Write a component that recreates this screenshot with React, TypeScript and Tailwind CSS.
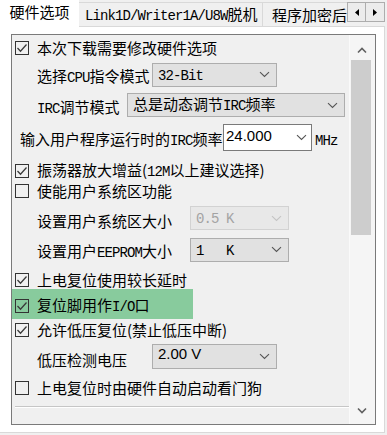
import type { ReactNode } from 'react';

function Mono({ children }: { children: ReactNode }) {
  return <span className="font-['Liberation_Mono',monospace] text-[14px] tracking-[-0.9px]">{children}</span>;
}

function Box({ checked }: { checked?: boolean }) {
  return (
    <span className="w-[14px] h-[14px] border border-[#333333] flex items-center justify-center shrink-0">
      {checked && (
        <svg width="12" height="12" viewBox="0 0 12 12">
          <path d="M1.5 6 L4.5 9.2 L10.5 2.5" fill="none" stroke="#3a3a3a" strokeWidth="1.3" />
        </svg>
      )}
    </span>
  );
}

function Chevron({ color = '#555555' }: { color?: string }) {
  return (
    <svg width="11" height="7" viewBox="0 0 11 7" className="shrink-0">
      <path d="M1 1.2 L5.5 5.5 L10 1.2" fill="none" stroke={color} strokeWidth="1.1" />
    </svg>
  );
}

function Combo({
  width,
  children,
  disabled,
}: {
  width: string;
  children: ReactNode;
  disabled?: boolean;
}) {
  return (
    <div
      className={`${width} h-[24px] flex items-center justify-between pl-[5px] pr-[6px] border ${
        disabled ? 'bg-[#e8e8e8] border-[#d2d2d2] text-[#a3a3a3]' : 'bg-[#e1e1e1] border-[#adadad] text-black'
      }`}
    >
      <span className="whitespace-pre leading-[20px]">{children}</span>
      <Chevron color={disabled ? '#c4c4c4' : '#555555'} />
    </div>
  );
}

function CheckRow({ checked, children, h, extra = '' }: { checked?: boolean; children: ReactNode; h: string; extra?: string }) {
  return (
    <div className={`${h} flex items-center pl-[3px] gap-[8px] ${extra}`}>
      <Box checked={checked} />
      <span className="whitespace-nowrap leading-[20px]">{children}</span>
    </div>
  );
}

export default function App() {
  return (
    <div className="w-[387px] h-[435px] bg-[#f0f0f0] overflow-hidden text-black text-[15px] font-['Noto_Sans_CJK_SC',sans-serif]">
      {/* tab strip */}
      <div className="flex h-[26px] items-end">
        <div className="relative z-10 w-[79px] h-[27px] -mb-px bg-white flex items-center justify-center pb-[3px]">
          <span className="leading-[20px]">硬件选项</span>
        </div>
        <div className="w-[184px] h-[24px] bg-[#f0f0f0] border-t border-r border-[#d9d9d9] flex items-center pl-[6px]">
          <span className="whitespace-nowrap leading-[20px]">
            <Mono>Link1D/Writer1A/U8W</Mono>脱机
          </span>
        </div>
        <div className="w-[84px] h-[24px] bg-[#f0f0f0] border-t border-[#d9d9d9] flex items-center pl-[9px] overflow-hidden">
          <span className="whitespace-nowrap leading-[20px]">程序加密后</span>
        </div>
        <div className="flex self-start mt-[2px]">
          <div className="w-[19px] h-[20px] border border-[#adadad] bg-[#ececec] flex items-center justify-center">
            <svg width="4" height="7" viewBox="0 0 4 7">
              <path d="M4 0 L0 3.5 L4 7 Z" fill="#000" />
            </svg>
          </div>
          <div className="w-[19px] h-[20px] border border-l-0 border-[#adadad] bg-[#ececec] flex items-center justify-center">
            <svg width="4" height="7" viewBox="0 0 4 7">
              <path d="M0 0 L4 3.5 L0 7 Z" fill="#000" />
            </svg>
          </div>
        </div>
      </div>

      {/* tab page */}
      <div className="w-[385px] h-[407px] bg-white border-t border-r border-b border-[#d9d9d9] pt-[7px] pl-[11px]">
        <div className="w-[365px] h-[391px] border border-[#7a7a7a] bg-[#f0f0f0] flex">
          {/* content */}
          <div className="w-[337px] flex flex-col">
            <CheckRow checked h="h-[26px]">
              本次下载需要修改硬件选项
            </CheckRow>

            <div className="h-[27px] flex items-center pl-[25px]">
              <span className="w-[115px] whitespace-nowrap leading-[20px] mt-[5px]">
                选择<Mono>CPU</Mono>指令模式
              </span>
              <Combo width="w-[125px]">
                <Mono>32-Bit</Mono>
              </Combo>
            </div>

            <div className="h-[34px] flex items-center pl-[25px]">
              <span className="w-[90px] whitespace-nowrap leading-[20px] mt-[5px]">
                <Mono>IRC</Mono>调节模式
              </span>
              <Combo width="w-[218px]">
                总是动态调节<Mono>IRC</Mono>频率
              </Combo>
            </div>

            <div className="h-[31px] flex items-center pl-[8px]">
              <span className="w-[203px] whitespace-nowrap leading-[20px] mt-[4px]">
                输入用户程序运行时的<Mono>IRC</Mono>频率
              </span>
              <div className="w-[89px] h-[27px] bg-white border border-[#7a7a7a] flex items-center justify-between pl-[2px] pr-[4px]">
                <span className="font-['Liberation_Sans',sans-serif] text-[15px] leading-[18px] -mt-[3px]">24.000</span>
                <Chevron />
              </div>
              <span className="ml-[3px] mt-[4px] leading-[20px]">
                <Mono>MHz</Mono>
              </span>
            </div>

            <CheckRow checked h="h-[20px]" extra="mt-[8px]">
              振荡器放大增益(<Mono>12M</Mono>以上建议选择)
            </CheckRow>
            <CheckRow h="h-[20px]">使能用户系统区功能</CheckRow>

            <div className="h-[34px] flex items-center pl-[25px]">
              <span className="w-[153px] whitespace-nowrap leading-[20px] mt-[5px]">设置用户系统区大小</span>
              <Combo width="w-[99px]" disabled>
                <Mono>0.5 K</Mono>
              </Combo>
            </div>

            <div className="h-[29px] flex items-center pl-[25px]">
              <span className="w-[153px] whitespace-nowrap leading-[20px] mt-[5px]">
                设置用户<Mono>EEPROM</Mono>大小
              </span>
              <Combo width="w-[99px]">
                <Mono>1   K</Mono>
              </Combo>
            </div>

            <CheckRow checked h="h-[19px]" extra="mt-[6px]">
              上电复位使用较长延时
            </CheckRow>
            <div className="h-[30px] w-[181px] bg-[#88cb9d] flex items-center pl-[3px] gap-[8px] pt-[4px]">
              <Box checked />
              <span className="whitespace-nowrap leading-[20px]">
                复位脚用作<Mono>I/O</Mono>口
              </span>
            </div>
            <CheckRow checked h="h-[22px]">
              允许低压复位(禁止低压中断)
            </CheckRow>

            <div className="h-[30px] flex items-center pl-[25px]">
              <span className="w-[115px] whitespace-nowrap leading-[20px] mt-[7px]">低压检测电压</span>
              <div className="w-[125px] h-[25px] bg-[#e1e1e1] border border-[#adadad] flex items-center justify-between pl-[5px] pr-[6px]">
                <span className="font-['Liberation_Sans',sans-serif] text-[15px] leading-[18px] -mt-[5px] whitespace-pre">2.00 V</span>
                <Chevron />
              </div>
            </div>

            <CheckRow h="h-[34px]">上电复位时由硬件自动启动看门狗</CheckRow>

            <div className="ml-[3px] mt-[1px] h-px bg-[#c6c6c6]" />
            <div className="ml-[3px] h-px bg-white" />
          </div>

          {/* scrollbar */}
          <div className="w-[26px] flex flex-col bg-[#f5f5f5] border-l border-[#fafafa]">
            <div className="h-[25px] flex items-center justify-center pt-[5px] pr-[2px]">
              <svg width="10" height="7" viewBox="0 0 10 7">
                <path d="M1 5.5 L5 1.5 L9 5.5" fill="none" stroke="#606060" strokeWidth="1.6" />
              </svg>
            </div>
            <div className="ml-[1px] w-[20px] h-[175px] bg-[#cdcdcd]" />
            <div className="flex-1" />
            <div className="h-[25px] flex items-center justify-center pb-[2px] pr-[2px]">
              <svg width="10" height="7" viewBox="0 0 10 7">
                <path d="M1 1.5 L5 5.5 L9 1.5" fill="none" stroke="#606060" strokeWidth="1.6" />
              </svg>
            </div>
          </div>
        </div>
      </div>
    </div>
  );
}
